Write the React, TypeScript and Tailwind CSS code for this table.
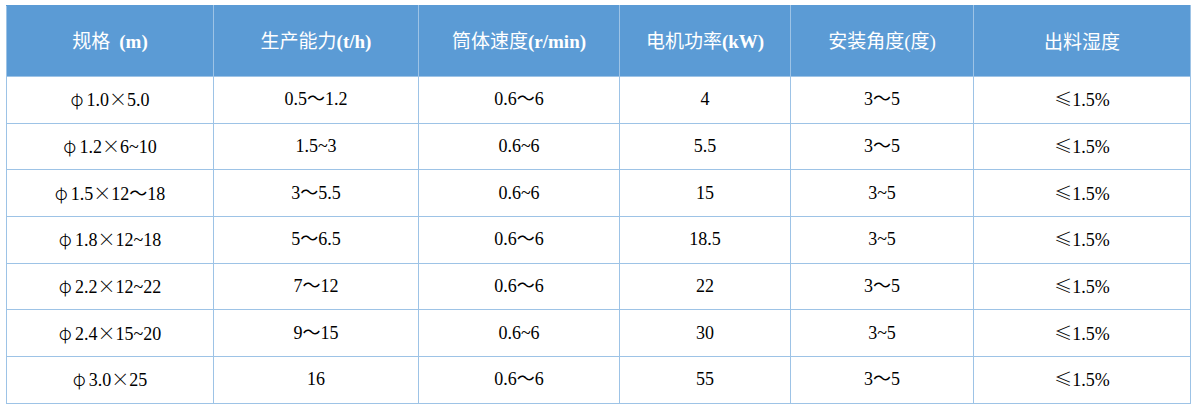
const headers = [
  { zh: "规格", en: "(m)" },
  { zh: "生产能力", en: "(t/h)" },
  { zh: "筒体速度", en: "(r/min)" },
  { zh: "电机功率", en: "(kW)" },
  { zh: "安装角度", en: "(度)" },
  { zh: "出料湿度", en: "" },
];

const widths = ["w-[207px]", "w-[205px]", "w-[201px]", "w-[171px]", "w-[183px]", "w-[217px]"];

const rows = [
  ["φ1.0×5.0", "0.5～1.2", "0.6～6", "4", "3～5", "≤1.5%"],
  ["φ1.2×6~10", "1.5~3", "0.6~6", "5.5", "3～5", "≤1.5%"],
  ["φ1.5×12～18", "3～5.5", "0.6~6", "15", "3~5", "≤1.5%"],
  ["φ1.8×12~18", "5～6.5", "0.6～6", "18.5", "3~5", "≤1.5%"],
  ["φ2.2×12~22", "7～12", "0.6～6", "22", "3～5", "≤1.5%"],
  ["φ2.4×15~20", "9～15", "0.6~6", "30", "3~5", "≤1.5%"],
  ["φ3.0×25", "16", "0.6～6", "55", "3～5", "≤1.5%"],
];

// φ × ≤ come out wide in the original (CJK font), so give them that font
function Cell({ text }: { text: string }) {
  const parts = text.split(/([φ×≤])/).filter(Boolean);
  return (
    <>
      {parts.map((p, i) =>
        p === "φ" || p === "×" || p === "≤" ? (
          <span
            key={i}
            className={`font-['Noto_Sans_CJK_SC',sans-serif] font-light ${p === "φ" ? "mr-[3px]" : ""}`}
          >
            {p}
          </span>
        ) : (
          <span key={i}>{p}</span>
        )
      )}
    </>
  );
}

export default function App() {
  return (
    <div className="w-[1200px] h-[414px] bg-white pt-[5px] pl-[6px]">
      <table className="border-collapse table-fixed w-[1184px]">
        <thead>
          <tr className="h-[71px] bg-[#5b9bd5]">
            {headers.map((h, i) => (
              <th
                key={i}
                className={`${widths[i]} border-[1.5px] border-[#9dc3e6] border-t-[#5b9bd5] text-center font-normal text-white text-[19px] font-['Noto_Sans_CJK_SC',sans-serif]`}
              >
                {h.zh}
                {h.en && (
                  <span
                    className={
                      h.en === "(度)"
                        ? "font-['Liberation_Serif','Noto_Sans_CJK_SC',serif]"
                        : `font-bold font-['Liberation_Serif','Noto_Sans_CJK_SC',serif] ${i === 0 ? "ml-[9px]" : ""}`
                    }
                  >
                    {h.en}
                  </span>
                )}
              </th>
            ))}
          </tr>
        </thead>
        <tbody>
          {rows.map((r, ri) => (
            <tr key={ri} className="h-[46.7px]">
              {r.map((c, ci) => (
                <td
                  key={ci}
                  className="border-[1.5px] border-[#9dc3e6] text-center text-[18px] text-black font-['Liberation_Serif','Noto_Sans_CJK_SC',serif]"
                >
                  <Cell text={c} />
                </td>
              ))}
            </tr>
          ))}
        </tbody>
      </table>
    </div>
  );
}
